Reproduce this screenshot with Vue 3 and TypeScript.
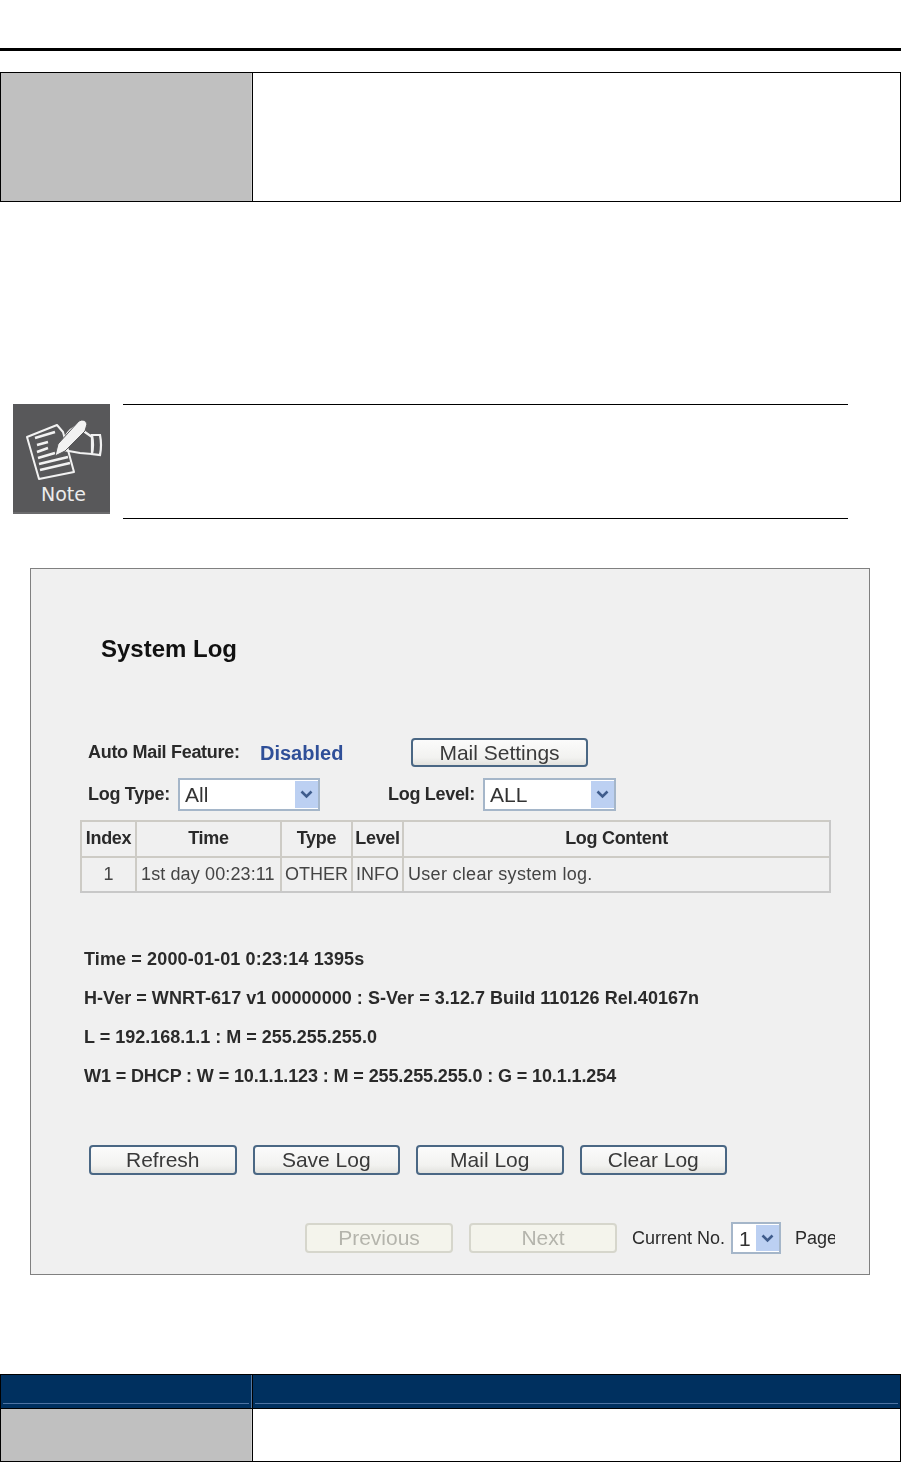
<script setup lang="ts">
const cols = ['Index', 'Time', 'Type', 'Level', 'Log Content']
const row = ['1', '1st day 00:23:11', 'OTHER', 'INFO', 'User clear system log.']
const info = [
  'Time = 2000-01-01 0:23:14 1395s',
  'H-Ver = WNRT-617 v1 00000000 : S-Ver = 3.12.7 Build 110126 Rel.40167n',
  'L = 192.168.1.1 : M = 255.255.255.0',
  'W1 = DHCP : W = 10.1.1.123 : M = 255.255.255.0 : G = 10.1.1.254',
]
const actions = ['Refresh', 'Save Log', 'Mail Log', 'Clear Log']
</script>

<template>
  <div class="page">
    <div class="rule"></div>

    <div class="doc-table top-table">
      <div class="label-cell"></div>
      <div class="value-cell"></div>
    </div>

    <div class="note">
      <svg class="note-icon" width="97" height="110" viewBox="0 0 97 110">
        <rect width="97" height="110" fill="#58585a" />
        <rect y="108" width="97" height="2" fill="#6b6b6d" />
        <path d="M14 33 L44 21 L50 28 L61 68 L26 75 Z" fill="#58585a" stroke="#f2f2f2" stroke-width="2" stroke-linejoin="round" />
        <path d="M22 34 L42 28 M24 41 L35 38 M24 48 L35 44 M25 54 L42 49 M26 60 L55 53 M27 66 L57 59" stroke="#f2f2f2" stroke-width="2.6" fill="none" />
        <path d="M50 38 Q54 27 62 23 M69 26 L79 33 L79 50 L67 49 L50 46" fill="none" stroke="#f2f2f2" stroke-width="2.2" stroke-linejoin="round" />
        <path d="M42 52 L45 40 L66 17 Q72 14 74 20 L72 27 L52 47 Z" fill="#f2f2f2" stroke="#58585a" stroke-width="1" />
        <path d="M79 31 L87 31 Q89 41 87 51 L79 50 Q81 41 79 31 Z" fill="#58585a" stroke="#f2f2f2" stroke-width="2.2" />
        <text x="28" y="97" class="note-text">Note</text>
      </svg>
      <div class="note-body"></div>
    </div>

    <div class="panel">
      <div class="title">System Log</div>

      <div class="mail-row">
        <span class="bold mail-label">Auto Mail Feature:</span>
        <span class="disabled">Disabled</span>
        <button class="btn mail-btn">Mail Settings</button>
      </div>

      <div class="filter-row">
        <span class="bold type-label">Log Type:</span>
        <div class="select type-select">
          <span class="sel-text">All</span>
          <span class="arrow"><svg width="13" height="9" viewBox="0 0 13 9"><path d="M1.5 1.5 L6.5 6.5 L11.5 1.5" fill="none" stroke="#3f5c8c" stroke-width="2.6" /></svg></span>
        </div>
        <span class="bold level-label">Log Level:</span>
        <div class="select level-select">
          <span class="sel-text">ALL</span>
          <span class="arrow"><svg width="13" height="9" viewBox="0 0 13 9"><path d="M1.5 1.5 L6.5 6.5 L11.5 1.5" fill="none" stroke="#3f5c8c" stroke-width="2.6" /></svg></span>
        </div>
      </div>

      <table class="log-table">
        <colgroup>
          <col class="c1" /><col class="c2" /><col class="c3" /><col class="c4" /><col />
        </colgroup>
        <tbody>
          <tr class="head">
            <td v-for="c in cols" :key="c">{{ c }}</td>
          </tr>
          <tr>
            <td v-for="(v, i) in row" :key="v" :class="{ tl: i === 1, content: i === 4 }">{{ v }}</td>
          </tr>
        </tbody>
      </table>

      <div class="info">
        <div v-for="l in info" :key="l" class="info-line">{{ l }}</div>
      </div>

      <div class="actions">
        <button v-for="a in actions" :key="a" class="btn action">{{ a }}</button>
      </div>

      <div class="pager">
        <button class="btn action off">Previous</button>
        <button class="btn action off">Next</button>
        <span class="current">Current No.</span>
        <div class="select page-select">
          <span class="sel-text">1</span>
          <span class="arrow"><svg width="13" height="9" viewBox="0 0 13 9"><path d="M1.5 1.5 L6.5 6.5 L11.5 1.5" fill="none" stroke="#3f5c8c" stroke-width="2.6" /></svg></span>
        </div>
        <span class="page-word">Page</span>
      </div>
    </div>

    <div class="doc-table bottom-head">
      <div class="head-cell"></div>
      <div class="head-cell"></div>
    </div>
    <div class="doc-table bottom-row">
      <div class="label-cell"></div>
      <div class="value-cell"></div>
    </div>
  </div>
</template>

<style>
html, body { margin: 0; background: #fff; }
</style>

<style scoped>
.page {
  width: 901px;
  height: 1462px;
  overflow: hidden;
  padding-top: 48px;
  box-sizing: border-box;
  background: #fff;
  font-family: "Liberation Sans", Arial, sans-serif;
  color: #333;
}
.rule { height: 3px; background: #000; }

.doc-table {
  display: grid;
  grid-template-columns: 251px 1fr;
  column-gap: 1px;
  background: #000;
  border: 1px solid #000;
  width: 901px;
  box-sizing: border-box;
}
.top-table { margin-top: 21px; height: 130px; }
.label-cell { background: #c0c0c0; border-right: 1px solid #d2d2d2; }
.value-cell { background: #fff; }

.note { display: flex; margin: 202px 0 0 13px; align-items: flex-start; }
.note-icon { display: block; flex: none; }
.note-text { font-family: "DejaVu Sans", sans-serif; font-size: 19px; fill: #ececec; }
.note-body {
  margin-left: 13px;
  width: 725px;
  height: 113px;
  border-top: 1px solid #000;
  border-bottom: 1px solid #000;
}

.panel {
  margin: 49px 0 0 30px;
  width: 840px;
  height: 707px;
  box-sizing: border-box;
  border: 1px solid #808080;
  background: #f0f0f0;
  overflow: hidden;
}
.title {
  margin: 65px 0 0 70px;
  height: 31px;
  line-height: 30px;
  font-size: 24px;
  font-weight: 700;
  color: #111;
  filter: blur(0.4px);
}
.bold { font-weight: 700; font-size: 18px; color: #2a2a2a; letter-spacing: -0.3px; filter: blur(0.4px); }
.mail-row {
  margin: 73px 0 0 57px;
  height: 29px;
  display: flex;
  align-items: center;
}
.mail-label { width: 172px; }
.disabled { width: 151px; font-size: 20px; font-weight: 700; color: #2f4f98; padding-top: 1px; filter: blur(0.4px); }
.btn {
  box-sizing: border-box;
  padding: 0;
  font-family: inherit;
  font-size: 21px;
  color: #3a3a3a;
  border: 2px solid #4a6784;
  border-radius: 4px;
  background: linear-gradient(#fbfbfb, #f2f2f0 70%, #e2e2de);
  filter: blur(0.4px);
}
.mail-btn { width: 177px; height: 29px; line-height: 25px; }

.filter-row {
  margin: 11px 0 0 57px;
  height: 33px;
  display: flex;
  align-items: center;
}
.type-label { width: 90px; }
.level-label { margin-left: 68px; width: 95px; }
.select {
  box-sizing: border-box;
  height: 33px;
  display: flex;
  align-items: center;
  justify-content: space-between;
  padding: 1px 0 1px 5px;
  background: #fff;
  border: 2px solid #a5b6c9;
  font-size: 21px;
  color: #333;
}
.sel-text { padding-top: 1px; filter: blur(0.4px); }
.type-select { width: 142px; }
.level-select { width: 133px; }
.arrow {
  width: 23px;
  align-self: stretch;
  display: flex;
  align-items: center;
  justify-content: center;
  background: #bcd0f2;
}
.log-table {
  margin: 9px 0 0 49px;
  width: 751px;
  height: 73px;
  box-sizing: border-box;
  table-layout: fixed;
  border-collapse: separate;
  border-spacing: 0;
  border-right: 2px solid #c8c8c8;
  border-bottom: 2px solid #c8c8c8;
  font-size: 18px;
}
.c1 { width: 55px; }
.c2 { width: 145px; }
.c3 { width: 71px; }
.c4 { width: 51px; }
.log-table td {
  padding: 0;
  text-align: center;
  white-space: nowrap;
  border-top: 2px solid #cdcbc5;
  border-left: 2px solid #cdcbc5;
  color: #444;
  filter: blur(0.4px);
}
.log-table td.tl { text-align: left; padding-left: 4px; letter-spacing: 0.12px; }
.log-table td.content { text-align: left; padding-left: 4px; letter-spacing: 0.3px; }
.log-table .head td { font-weight: 700; color: #2a2a2a; letter-spacing: -0.3px; }

.info { margin: 47px 0 0 53px; }
.info-line {
  height: 39px;
  line-height: 39px;
  font-size: 18px;
  font-weight: 700;
  color: #2a2a2a;
  white-space: nowrap;
  filter: blur(0.4px);
}
.info-line:nth-child(1) { letter-spacing: 0.13px; }
.info-line:nth-child(2) { letter-spacing: 0.04px; }
.info-line:nth-child(4) { letter-spacing: -0.11px; }

.actions {
  margin: 49px 0 0 58px;
  display: flex;
  column-gap: 16px;
}
.action { width: 147.5px; height: 30px; line-height: 26px; }
.pager {
  margin: 47px 0 0 274px;
  width: 530px;
  height: 32px;
  overflow: hidden;
  display: flex;
  align-items: center;
  column-gap: 16px;
  white-space: nowrap;
}
.off {
  flex: none;
  width: 148px;
  border-color: #d6d6cc;
  background: #f4f4ec;
  color: #b4b4ac;
}
.current { font-size: 18px; color: #2a2a2a; margin-left: -1px; filter: blur(0.4px); }
.page-select {
  flex: none;
  width: 50px;
  height: 32px;
  margin-left: -10px;
  padding-left: 6px;
}
.page-word { font-size: 18px; color: #2a2a2a; margin-left: -2px; filter: blur(0.4px); }

.bottom-head { margin-top: 99px; height: 35px; }
.head-cell {
  background: #00305f;
  position: relative;
  border-right: 1px solid #5577a0;
}
.head-cell + .head-cell { border-right: 0; }
.head-cell::after {
  content: "";
  position: absolute;
  left: 2px;
  right: 2px;
  bottom: 4px;
  height: 1px;
  background: #4f74a3;
}
.bottom-row { height: 53px; border-top: 0; }
</style>
